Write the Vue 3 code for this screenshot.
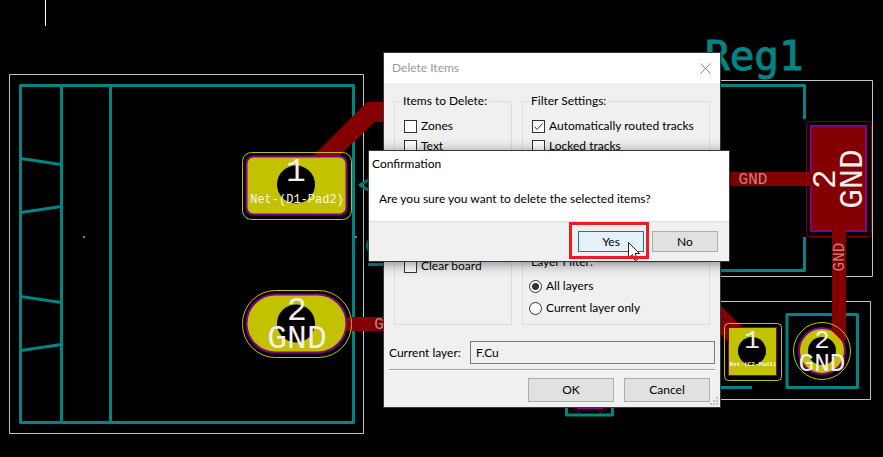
<script setup>
import { ref } from 'vue'

const itemTypes = ref([
  { id: 'zones', label: 'Zones', checked: false, slot: 'row-1' },
  { id: 'text', label: 'Text', checked: false, slot: 'row-2' },
  { id: 'board', label: 'Clear board', checked: false, slot: 'row-8' }
])
const filters = ref([
  { id: 'auto', label: 'Automatically routed tracks', checked: true },
  { id: 'locked', label: 'Locked tracks', checked: false }
])
const scopes = [
  { id: 'all', label: 'All layers' },
  { id: 'current', label: 'Current layer only' }
]
const scope = ref('all')
const layer = 'F.Cu'
</script>

<template>
  <main class="workspace">
    <svg class="board" aria-label="Circuit board">
      <path class="cursor-line" d="M45.5 0V26" />
      <g class="courtyard">
        <path d="M9.5 74.5H363.5V433.5H9.5Z" />
        <path d="M700 80.5H872.5V276.5H700" />
        <path d="M700 301.5H870.5V399.5H700" />
        <path d="M465 407.5H478M507 407.5H518" />
      </g>
      <g class="silk">
        <path d="M20.5 85.5H353.5V422.5H20.5ZM61.5 85V422M110.5 85V422" />
        <path d="M21 158.5L61 164.5M21 212.5L61 206.5M21 296.5L61 302.5M21 350.5L61 344.5" />
        <path d="M372 178L360 185L372 192M374 235Q361 246 374 256M368 264.5H390" />
        <path d="M700 85.5H804.5V119M804.5 237V270.5H700" />
        <path d="M787 314.5H857.5V387.5H787Z" />
        <path d="M700 387.5H752M566.5 400V415H612.5V400" />
      </g>
      <path class="dot" d="M83 236h2v2h-2zM355 236h2v2h-2z" />
      <text class="ref-label" x="705" y="70">Reg1</text>

      <path class="copper" d="M312 157L367 102H390V122H375L338 157Z" />
      <path class="copper" d="M345 317H390V331H345Z" />
      <path class="copper" d="M720 172H812V186H720Z" />
      <path class="copper" d="M832 228H846V340H832Z" />
      <path class="copper" d="M716 301L743 328V344H731L716 330Z" />
      <path class="copper" d="M478 407H507V408H478Z" />

      <rect class="pad" x="246.5" y="156.5" width="100" height="58" rx="7" />
      <rect class="clear" x="242.5" y="152.5" width="109" height="67" rx="9" />
      <circle cx="296" cy="184.500" r="19" />
      <text class="pad-text" x="296" y="181">1</text>
      <text class="net-text" x="297" y="203">Net-(D1-Pad2)</text>

      <rect class="pad" x="246.5" y="294.500" width="100" height="58" rx="29" />
      <rect class="clear" x="242.5" y="290.500" width="109" height="67" rx="33" />
      <circle cx="296" cy="323.500" r="19" />
      <text class="pad-text" x="297" y="320">2</text>
      <text class="pad-text" x="297" y="348">GND</text>
      <text class="track-text" x="379" y="329">G</text>

      <path class="smd" d="M811 126H866V231H811Z" />
      <path class="copper" d="M800 172H813V186H800ZM832 225H846V240H832Z" />
      <rect class="smd-clear" x="806.5" y="121.500" width="65" height="115" rx="4" />
      <text class="pad-text" transform="translate(835 179) rotate(-90)">2</text>
      <text class="pad-text" transform="translate(862 179) rotate(-90)">GND</text>
      <text class="track-text" x="753" y="184">GND</text>
      <text class="track-text" transform="translate(844 257) rotate(-90)">GND</text>

      <rect class="pad thin" x="728.5" y="327.500" width="48" height="48" />
      <path class="copper" d="M724 324H739L743 328H729V342L724 337Z" />
      <rect class="clear" x="724.5" y="323.500" width="57" height="57" rx="4" />
      <circle cx="752" cy="351" r="14" />
      <text class="pad-text small" x="752" y="348">1</text>
      <text class="net-text tiny" x="753" y="366">Net-(C2-Pad1)</text>

      <circle class="pad" cx="822" cy="351" r="23" />
      <path class="copper" d="M832 325H846V340L843 342L832 331Z" />
      <circle class="clear" cx="822" cy="351" r="28.5" />
      <circle cx="822" cy="351" r="14" />
      <text class="pad-text small" x="822" y="348">2</text>
      <text class="pad-text small" x="822" y="371">GND</text>

      <path class="arc-red" d="M571 405Q576 412.500 582 413.500H597Q603 412.500 608 405" />
      <path class="arc-purple" d="M577 407.500H603" />
    </svg>

    <section class="dialog" aria-label="Delete Items">
      <header class="dialog-title">
        <h1>Delete Items</h1>
        <button class="close" aria-label="Close">
          <svg width="11" height="11" viewBox="0 0 11 11"><path d="M.5 .5L10.500 10.500M10.500 .5L.5 10.500" /></svg>
        </button>
      </header>
      <form class="dialog-body" @submit.prevent>
        <div class="groups">
          <fieldset>
            <legend>Items to Delete:</legend>
            <div class="items">
              <label v-for="item in itemTypes" :key="item.id" :class="['option', item.slot]">
                <input v-model="item.checked" type="checkbox" />{{ item.label }}
              </label>
            </div>
          </fieldset>
          <div class="column">
            <fieldset class="grow">
              <legend>Filter Settings:</legend>
              <div class="filters">
                <label v-for="f in filters" :key="f.id" class="option">
                  <span class="check">
                    <input v-model="f.checked" type="checkbox" />
                    <svg v-if="f.checked" width="13" height="13" viewBox="0 0 13 13"><path d="M2.500 6.500L5 9.500L10.500 3.500" /></svg>
                  </span>{{ f.label }}
                </label>
              </div>
            </fieldset>
            <fieldset>
              <legend>Layer Filter:</legend>
              <div class="scopes">
                <label v-for="s in scopes" :key="s.id" class="option">
                  <input v-model="scope" type="radio" name="scope" :value="s.id" />{{ s.label }}
                </label>
              </div>
            </fieldset>
          </div>
        </div>
        <div class="layer-row">
          <label for="layer">Current layer:</label>
          <input id="layer" type="text" :value="layer" readonly />
        </div>
        <hr />
        <footer class="actions">
          <button class="btn" type="submit">OK</button>
          <button class="btn" type="button">Cancel</button>
        </footer>
      </form>
      <svg class="grip" width="8" height="8" viewBox="0 0 8 8"><path d="M6 0h2v2h-2zM3 3h2v2h-2zM6 3h2v2h-2zM0 6h2v2h-2zM3 6h2v2h-2zM6 6h2v2h-2z" /></svg>
    </section>

    <section class="confirm" role="alertdialog" aria-label="Confirmation">
      <h2>Confirmation</h2>
      <p>Are you sure you want to delete the selected items?</p>
      <footer>
        <button class="btn focused">Yes</button>
        <button class="btn">No</button>
      </footer>
      <svg class="pointer" width="13" height="20" viewBox="0 0 13 20"><path d="M.5 .5V16L4.500 12.500L7 18.500L9.500 17.500L7 11.500H11.500Z" /></svg>
      <div class="highlight"></div>
    </section>
  </main>
</template>

<style>
body {
  background: #000;
}
</style>

<style scoped>
.workspace {
  position: relative;
  min-height: 100vh;
  overflow: hidden;
  background: #000;
  color: #000;
  font: 12px/16px Lato, sans-serif;
}
.board {
  position: absolute;
  inset: 0;
  width: 100%;
  height: 100%;
  font-family: "Liberation Mono", monospace;
}
.cursor-line { stroke: #fff; }
.courtyard { fill: none; stroke: #c2c2c2; }
.silk { fill: none; stroke: #008484; stroke-width: 3; stroke-linejoin: round; }
.dot { fill: #848484; }
.copper { fill: #840000; }
.pad { fill: #c2c200; stroke: #840084; stroke-width: 2; }
.pad.thin { stroke-width: 1; }
.clear { fill: none; stroke: #c2c200; }
.smd { fill: #840000; stroke: #840084; stroke-width: 2; }
.smd-clear { fill: none; stroke: #840000; }
.arc-red { fill: none; stroke: #840000; }
.arc-purple { stroke: #840084; stroke-width: 3; }
.ref-label { font: 41px "DejaVu Sans Mono", monospace; fill: #008484; stroke: #008484; }
.pad-text { font-size: 33px; fill: #f4eeee; text-anchor: middle; }
.pad-text.small { font-size: 26px; }
.net-text { font-size: 12px; fill: #f8f8e8; text-anchor: middle; }
.net-text.tiny { font-size: 6px; font-weight: bold; }
.track-text { font-size: 16px; fill: #c08484; text-anchor: middle; }

.dialog {
  position: absolute;
  left: 383px;
  top: 52px;
  width: 338px;
  box-sizing: border-box;
  border: 1px solid #383838;
  background: #f0f0f0;
}
.dialog-title {
  display: flex;
  align-items: center;
  justify-content: space-between;
  height: 30px;
  padding: 0 9px 0 8px;
  background: #fff;
}
h1, h2 {
  margin: 0;
  font-size: 12px;
  font-weight: normal;
}
h1 { color: #999; }
.close {
  display: flex;
  padding: 0;
  border: 0;
  background: none;
}
.close path { stroke: #888; fill: none; }
.dialog-body { padding: 10px 5px 5px; }
.groups {
  display: grid;
  grid-template-columns: 118px minmax(0, 1fr);
  gap: 10px;
  padding: 0 5px;
}
.column {
  display: flex;
  flex-direction: column;
  gap: 4px;
}
.grow { flex: 1; }
fieldset {
  min-width: 0;
  margin: 0;
  padding: 0 6px;
  border: 1px solid #dcdcdc;
}
legend { padding: 0 2px; }
.items {
  display: grid;
  grid-auto-rows: 20px;
  padding: 7px 3px 48px;
}
.row-1 { grid-row: 1; }
.row-2 { grid-row: 2; }
.row-8 { grid-row: 8; }
.filters {
  display: grid;
  grid-auto-rows: 20px;
  padding: 7px 3px;
}
.scopes {
  display: grid;
  grid-auto-rows: 22px;
  padding: 5px 0;
}
.option {
  display: flex;
  align-items: center;
  gap: 4px;
  white-space: nowrap;
}
.check {
  position: relative;
  display: flex;
}
.check svg {
  position: absolute;
  inset: 0;
  pointer-events: none;
}
.check path { fill: none; stroke: #333; stroke-width: 1; }
.option input {
  appearance: none;
  flex: none;
  width: 13px;
  height: 13px;
  margin: 0;
  border: 1px solid #333;
  background: #fff;
}
.option input[type="radio"] { border-radius: 50%; }
.option input[type="radio"]:checked {
  background: radial-gradient(circle, #333 0 3px, #fff 4px);
}
.layer-row {
  display: flex;
  align-items: center;
  justify-content: space-between;
  margin-top: 16px;
}
.layer-row input {
  box-sizing: border-box;
  width: 245px;
  height: 23px;
  padding: 0 5px;
  border: 1px solid #7a7a7a;
  background: #f0f0f0;
  color: #000;
  font: inherit;
}
hr {
  margin: 5px 0 7px;
  border: 0;
  border-top: 1px solid #a0a0a0;
  border-bottom: 1px solid #fff;
}
.actions {
  display: flex;
  justify-content: flex-end;
  gap: 10px;
  padding: 0 5px;
}
.btn {
  width: 86px;
  height: 24px;
  padding: 0;
  border: 1px solid #adadad;
  background: #e1e1e1;
  color: #000;
  font: inherit;
}
.grip {
  position: absolute;
  right: 2px;
  bottom: 2px;
  fill: #bfbfbf;
}

.confirm {
  position: absolute;
  left: 368px;
  top: 150px;
  width: 362px;
  box-sizing: border-box;
  border: 1px solid #383838;
  background: #fff;
  box-shadow: 0 2px 12px rgba(0, 0, 0, 0.45);
}
h2 { padding: 5px 3px 4px; }
.confirm p {
  margin: 0;
  padding: 15px 10px 14px;
}
.confirm footer {
  display: flex;
  justify-content: flex-end;
  gap: 8px;
  padding: 9px 11px 9px 10px;
  border-top: 1px solid #dfdfdf;
  background: #f0f0f0;
}
.confirm .btn {
  width: 66px;
  height: 21px;
}
.confirm .btn.focused {
  border-color: #0078d7;
  background: #e5f1fb;
}
.highlight {
  position: absolute;
  right: 80px;
  bottom: 2px;
  width: 80px;
  height: 37px;
  box-sizing: border-box;
  border: 3px solid #ed1c24;
  pointer-events: none;
}
.pointer {
  position: absolute;
  left: 259px;
  top: 91px;
}
.pointer path { fill: #fff; stroke: #222; }
</style>
